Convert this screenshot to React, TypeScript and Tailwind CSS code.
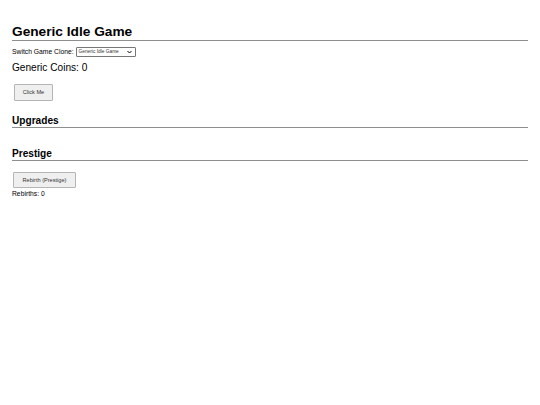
import React from "react";

const App = () => {
  return (
    <div className="min-h-[405px] w-[540px] bg-white px-3 pt-[24px] font-['Liberation_Sans',Arial,sans-serif] text-black">
      <h1 className="border-b border-[#8f8f8f] text-[13.7px] font-bold leading-[16px]">Generic Idle Game</h1>

      <div className="mt-[6px] flex items-center gap-[2px] text-[6.75px] leading-[10px]">
        <span>Switch Game Clone:</span>
        <div className="flex h-[10px] w-[60px] items-center justify-between rounded-[1px] border border-[#767676] bg-white pl-[2px] pr-[3px] text-[4.8px] text-[#333]">
          <span>Generic Idle Game</span>
          <svg width="5" height="4" viewBox="0 0 10 8" fill="none" stroke="black" strokeWidth="2">
            <path d="M1 2l4 4 4-4" />
          </svg>
        </div>
      </div>

      <div className="mt-[5px] text-[10.125px] leading-[12px]">Generic Coins: 0</div>

      <button className="ml-[2px] mt-[10px] h-[17px] w-[39px] rounded-[1px] border border-[#b5b5b5] bg-[#efefef] text-[5.6px] text-[#333]">
        Click Me
      </button>

      <h2 className="mt-[15px] border-b border-[#8f8f8f] pb-[1px] text-[10.125px] font-bold leading-[10px]">Upgrades</h2>

      <h2 className="mt-[21px] border-b border-[#8f8f8f] pb-[1px] text-[10.125px] font-bold leading-[10px]">Prestige</h2>

      <button className="ml-[1px] mt-[11px] h-[16px] w-[63px] rounded-[1px] border border-[#b5b5b5] bg-[#efefef] text-[5.6px] text-[#333]">
        Rebirth (Prestige)
      </button>

      <div className="text-[6.75px] leading-[10px]">Rebirths: 0</div>
    </div>
  );
};

export default App;
